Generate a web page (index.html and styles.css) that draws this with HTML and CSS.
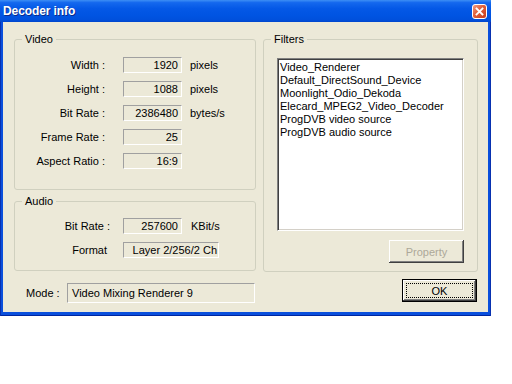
FILE: index.html
```html
<!DOCTYPE html>
<html>
<head>
<meta charset="utf-8">
<link rel="stylesheet" href="styles.css">
</head>
<body>
<div class="window">
  <div class="titlebar">
    <span class="title">Decoder info</span>
    <span class="close">
      <svg width="15" height="15" viewBox="0 0 15 15">
        <defs>
          <linearGradient id="cg" x1="0" y1="0" x2="1" y2="1">
            <stop offset="0" stop-color="#F0A08A"/>
            <stop offset="0.45" stop-color="#E0603A"/>
            <stop offset="1" stop-color="#C2391A"/>
          </linearGradient>
        </defs>
        <rect x="0.5" y="0.5" width="14" height="14" rx="2.5" fill="url(#cg)" stroke="#FFFFFF"/>
        <path d="M4.5 4.5 L10.5 10.5 M10.5 4.5 L4.5 10.5" stroke="#FFFFFF" stroke-width="1.8" stroke-linecap="square"/>
      </svg>
    </span>
  </div>
  <div class="client">
    <div class="main">
      <div class="leftcol">
        <div class="group video">
          <div class="glabel">Video</div>
          <div class="rows">
            <div class="lbl">Width :</div><div class="field">1920</div><div class="unit">pixels</div>
            <div class="lbl">Height :</div><div class="field">1088</div><div class="unit">pixels</div>
            <div class="lbl">Bit Rate :</div><div class="field">2386480</div><div class="unit">bytes/s</div>
            <div class="lbl">Frame Rate :</div><div class="field">25</div><div class="unit"></div>
            <div class="lbl">Aspect Ratio :</div><div class="field">16:9</div><div class="unit"></div>
          </div>
        </div>
        <div class="group audio">
          <div class="glabel">Audio</div>
          <div class="rows arows">
            <div class="lbl">Bit Rate :</div><div class="field">257600</div><div class="unit">KBit/s</div>
            <div class="lbl lbl-format">Format</div><div class="field field-wide">Layer 2/256/2 Ch</div><div class="unit"></div>
          </div>
        </div>
      </div>
      <div class="group filters">
        <div class="glabel">Filters</div>
        <div class="listbox">
          <div class="item">Video_Renderer</div>
          <div class="item">Default_DirectSound_Device</div>
          <div class="item">Moonlight_Odio_Dekoda</div>
          <div class="item">Elecard_MPEG2_Video_Decoder</div>
          <div class="item">ProgDVB video source</div>
          <div class="item">ProgDVB audio source</div>
        </div>
        <div class="btnrow">
          <button class="btn disabled">Property</button>
        </div>
      </div>
    </div>
    <div class="bottom">
      <div class="mode">
        <span class="mode-lbl">Mode :</span>
        <div class="field modefield">Video Mixing Renderer 9</div>
      </div>
      <button class="btn default"><span class="focus">OK</span></button>
    </div>
  </div>
</div>
</body>
</html>
```

FILE: styles.css
```css
html, body {
  margin: 0;
  padding: 0;
  background: #FFFFFF;
}

body {
  font-family: "Liberation Sans", Arial, sans-serif;
  font-size: 11px;
  color: #000000;
}

.window {
  width: 491px;
  box-sizing: border-box;
  padding: 0 3px 4px;
  background: #0A4FDC;
  box-shadow: inset 1px 0 #0831B0, inset -1px 0 #0831B0, inset 0 -1px #0026A0;
}

.titlebar {
  height: 22px;
  margin: 0 -3px;
  display: flex;
  align-items: center;
  justify-content: space-between;
  padding: 0 4px 0 3px;
  background: linear-gradient(to bottom, #3D8FF5 0%, #1468EE 12%, #0458E6 40%, #0054E2 70%, #0050DC 90%, #0046CC 100%);
}

.title {
  color: #FFFFFF;
  font-weight: bold;
  font-size: 12px;
  letter-spacing: -0.1px;
  text-shadow: 1px 1px #0B2A8A;
  line-height: 14px;
}

.close {
  display: flex;
  width: 15px;
  height: 15px;
}

.client {
  box-sizing: border-box;
  height: 290px;
  background: #ECE9D8;
  padding: 17px 10px 0 11px;
}

.main {
  display: grid;
  grid-template-columns: 242px 215px;
  column-gap: 7px;
}

.leftcol {
  display: flex;
  flex-direction: column;
  gap: 11px;
}

.group {
  box-sizing: border-box;
  border: 1px solid #D0D0BF;
  border-radius: 3px;
}

.video { height: 151px; }
.audio { height: 70px; }
.filters {
  height: 233px;
  padding: 0 13px;
}

.glabel {
  width: fit-content;
  height: 13px;
  line-height: 13px;
  margin: -7px 0 0 7px;
  padding: 0 3px;
  background: #ECE9D8;
}

.filters .glabel {
  margin-left: -6px;
}

.rows {
  display: grid;
  grid-template-columns: 100px 59px auto;
  column-gap: 8px;
  row-gap: 8px;
  align-items: center;
  margin-top: 11px;
}

.arows {
  margin-top: 10px;
}

.lbl {
  text-align: right;
  padding-right: 10px;
  white-space: nowrap;
}

.arows .lbl {
  padding-right: 5px;
}

.arows .lbl-format {
  padding-right: 8px;
}

.unit {
  white-space: nowrap;
}

.arows .unit {
  padding-left: 1px;
}

.field {
  box-sizing: border-box;
  height: 16px;
  line-height: 14px;
  border-top: 1px solid #A0A0A0;
  border-left: 1px solid #A0A0A0;
  border-right: 1px solid #FFFFFF;
  border-bottom: 1px solid #FFFFFF;
  text-align: right;
  padding-right: 3px;
  white-space: nowrap;
  overflow: hidden;
}

.field-wide {
  width: 96px;
  padding-right: 1px;
}

.listbox {
  box-sizing: border-box;
  width: 187px;
  height: 173px;
  margin-top: 12px;
  background: #FFFFFF;
  border-top: 1px solid #808080;
  border-left: 1px solid #808080;
  border-right: 1px solid #FFFFFF;
  border-bottom: 1px solid #FFFFFF;
  box-shadow: inset 1px 1px #404040, inset -1px -1px #D4D0C8;
  padding: 2px 2px;
}

.item {
  line-height: 13px;
  white-space: nowrap;
}

.btnrow {
  display: flex;
  justify-content: flex-end;
  margin-top: 9px;
}

.btn {
  box-sizing: border-box;
  width: 75px;
  height: 23px;
  margin: 0;
  padding: 0;
  border: none;
  background: #ECE9D8;
  font-family: "Liberation Sans", Arial, sans-serif;
  font-size: 11px;
  color: #000000;
  box-shadow: inset -1px -1px #404040, inset 1px 1px #FFFFFF, inset -2px -2px #808080, inset 2px 2px #ECE9D8;
}

.btn.disabled {
  color: #ACA899;
}

.bottom {
  display: flex;
  justify-content: space-between;
  align-items: flex-start;
  margin-top: 7px;
  padding-right: 1px;
}

.mode {
  display: flex;
  align-items: center;
  margin-top: 4px;
  padding-left: 12px;
}

.mode-lbl {
  width: 41px;
  white-space: nowrap;
}

.modefield {
  width: 188px;
  height: 20px;
  line-height: 18px;
  text-align: left;
  padding-left: 4px;
}

.btn.default {
  border: 1px solid #000000;
  display: flex;
  padding: 3px;
  box-shadow: inset -1px -1px #404040, inset 1px 1px #FFFFFF, inset -2px -2px #808080;
}

.focus {
  flex: 1;
  display: flex;
  align-items: center;
  justify-content: center;
  border: 1px dotted #000000;
}
```
